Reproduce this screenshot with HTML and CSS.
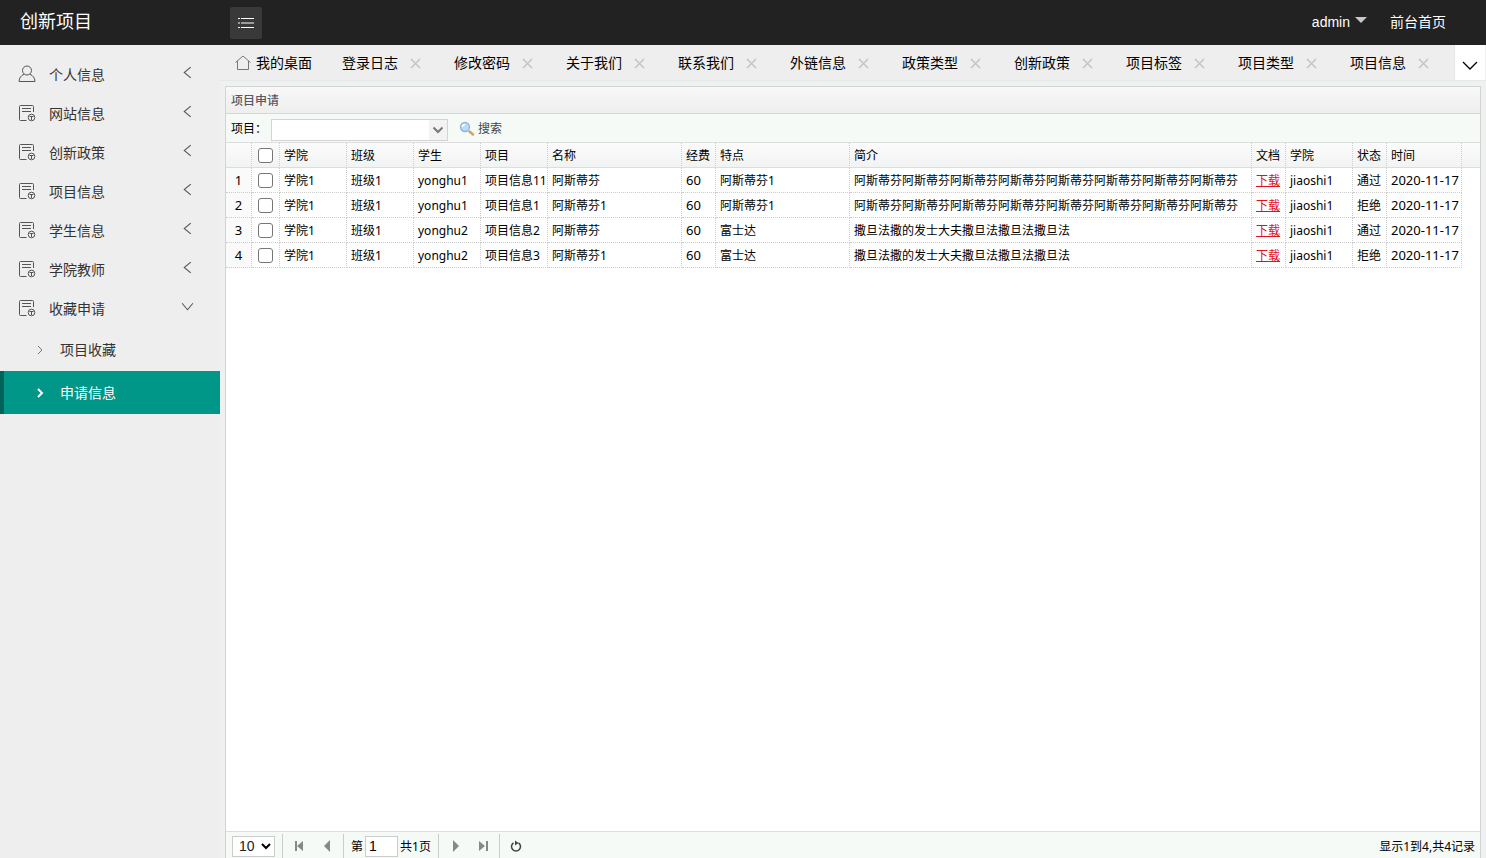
FILE: index.html
```html
<!DOCTYPE html>
<html lang="zh-CN">
<head>
<meta charset="utf-8">
<title>创新项目</title>
<link rel="stylesheet" href="styles.css">
</head>
<body>
<svg class="defs" width="0" height="0" aria-hidden="true">
  <symbol id="left" viewBox="0 0 12 12"><path d="M9 1 3 6l6 5"/></symbol>
  <symbol id="down" viewBox="0 0 12 12"><path d="m1 3 5 6 5-6"/></symbol>
  <symbol id="right" viewBox="0 0 12 12"><path d="m4 2 4 4-4 4"/></symbol>
  <symbol id="close" viewBox="0 0 12 12"><path d="m1 1 9 9M10 1 1 10"/></symbol>
  <symbol id="doc" viewBox="0 0 18 18"><path d="M15.500 8V2.500a1 1 0 0 0-1-1h-12a1 1 0 0 0-1 1v13a1 1 0 0 0 1 1H8.500M4 4.500h9M4 7.500h9"/><circle cx="13.500" cy="13.500" r="3.300"/><path d="M11.500 12.500h4M13.500 12.500v3.500"/></symbol>
  <symbol id="user" viewBox="0 0 18 18"><circle cx="9" cy="5.500" r="4.500"/><path d="M6 9.300C3 10.500 1.200 13 1 16.500h16c-.2-3.500-2-6-5-7.200"/></symbol>
</svg>
<header class="topbar">
  <a class="logo" href="#">创新项目</a>
  <button class="menu-toggle" aria-label="菜单"><svg width="18" height="12" viewBox="0 0 18 12"><path d="M1 1.500h2M4 1.500h13M1 6h2M4 6h13M1 10.500h2M4 10.500h13"/></svg></button>
  <nav class="top-links"><a href="#">admin<span class="caret"></span></a><a href="#">前台首页</a></nav>
</header>
<div class="shell">
  <nav class="sidebar">
    <a class="item" href="#"><svg class="kind"><use href="#user"/></svg>个人信息<svg class="arrow"><use href="#left"/></svg></a>
    <a class="item" href="#"><svg class="kind"><use href="#doc"/></svg>网站信息<svg class="arrow"><use href="#left"/></svg></a>
    <a class="item" href="#"><svg class="kind"><use href="#doc"/></svg>创新政策<svg class="arrow"><use href="#left"/></svg></a>
    <a class="item" href="#"><svg class="kind"><use href="#doc"/></svg>项目信息<svg class="arrow"><use href="#left"/></svg></a>
    <a class="item" href="#"><svg class="kind"><use href="#doc"/></svg>学生信息<svg class="arrow"><use href="#left"/></svg></a>
    <a class="item" href="#"><svg class="kind"><use href="#doc"/></svg>学院教师<svg class="arrow"><use href="#left"/></svg></a>
    <a class="item" href="#"><svg class="kind"><use href="#doc"/></svg>收藏申请<svg class="arrow"><use href="#down"/></svg></a>
    <a class="sub" href="#"><svg><use href="#right"/></svg>项目收藏</a>
    <a class="sub active" href="#"><svg><use href="#right"/></svg>申请信息</a>
  </nav>
  <main class="content">
    <div class="tabbar">
      <div class="tabs">
        <div class="tab home"><svg width="16" height="16" viewBox="0 0 16 16"><path d="M.500 7.500 8 1l7.500 6.500M2.500 6v8.500h11V6"/></svg><a href="#">我的桌面</a></div>
        <div class="tab"><a href="#">登录日志</a><button aria-label="关闭"><svg><use href="#close"/></svg></button></div>
        <div class="tab"><a href="#">修改密码</a><button aria-label="关闭"><svg><use href="#close"/></svg></button></div>
        <div class="tab"><a href="#">关于我们</a><button aria-label="关闭"><svg><use href="#close"/></svg></button></div>
        <div class="tab"><a href="#">联系我们</a><button aria-label="关闭"><svg><use href="#close"/></svg></button></div>
        <div class="tab"><a href="#">外链信息</a><button aria-label="关闭"><svg><use href="#close"/></svg></button></div>
        <div class="tab"><a href="#">政策类型</a><button aria-label="关闭"><svg><use href="#close"/></svg></button></div>
        <div class="tab"><a href="#">创新政策</a><button aria-label="关闭"><svg><use href="#close"/></svg></button></div>
        <div class="tab"><a href="#">项目标签</a><button aria-label="关闭"><svg><use href="#close"/></svg></button></div>
        <div class="tab"><a href="#">项目类型</a><button aria-label="关闭"><svg><use href="#close"/></svg></button></div>
        <div class="tab"><a href="#">项目信息</a><button aria-label="关闭"><svg><use href="#close"/></svg></button></div>
      </div>
      <button class="more" aria-label="更多"><svg width="16" height="10" viewBox="0 0 16 10"><path d="m1 1 7 7 7-7"/></svg></button>
    </div>
    <section class="panel">
      <h1 class="panel-title">项目申请</h1>
      <form class="toolbar">
        <label for="project">项目：</label>
        <span class="combo"><input id="project" type="text"><button type="button" aria-label="展开"><svg width="12" height="8" viewBox="0 0 12 8"><path d="m1.500 1.500 4.500 4.500 4.500-4.500"/></svg></button></span>
        <button class="search" type="button"><svg width="16" height="16" viewBox="0 0 16 16"><path d="m10.500 10.500 3.500 3" stroke="#d9a05a" stroke-width="2.500" stroke-linecap="round"/><circle cx="6" cy="6" r="4.500" fill="#b5dcf8" stroke="#8fb2dc" stroke-width="1.300"/><path d="M3.500 6A2.500 2.500 0 0 1 6 3.500" stroke="#fff" stroke-width="1.500" fill="none"/></svg>搜索</button>
      </form>
      <div class="grid-area">
        <table class="grid">
          <colgroup><col class="w-num"><col class="w-check"><col class="w-m"><col class="w-m"><col class="w-m"><col class="w-m"><col class="w-l"><col class="w-s"><col class="w-l"><col class="w-xl"><col class="w-s"><col class="w-m"><col class="w-s"><col class="w-date"><col></colgroup>
          <thead><tr><th></th><th class="check"><input type="checkbox" aria-label="全选"></th><th>学院</th><th>班级</th><th>学生</th><th>项目</th><th>名称</th><th>经费</th><th>特点</th><th>简介</th><th>文档</th><th>学院</th><th>状态</th><th>时间</th><th class="rest"></th></tr></thead>
          <tbody>
            <tr><td class="num">1</td><td class="check"><input type="checkbox" aria-label="选择第1行"></td><td>学院1</td><td>班级1</td><td>yonghu1</td><td>项目信息11</td><td>阿斯蒂芬</td><td class="figure">60</td><td>阿斯蒂芬1</td><td>阿斯蒂芬阿斯蒂芬阿斯蒂芬阿斯蒂芬阿斯蒂芬阿斯蒂芬阿斯蒂芬阿斯蒂芬</td><td><a href="#">下载</a></td><td>jiaoshi1</td><td>通过</td><td class="figure">2020-11-17</td><td class="rest"></td></tr>
            <tr><td class="num">2</td><td class="check"><input type="checkbox" aria-label="选择第2行"></td><td>学院1</td><td>班级1</td><td>yonghu1</td><td>项目信息1</td><td>阿斯蒂芬1</td><td class="figure">60</td><td>阿斯蒂芬1</td><td>阿斯蒂芬阿斯蒂芬阿斯蒂芬阿斯蒂芬阿斯蒂芬阿斯蒂芬阿斯蒂芬阿斯蒂芬</td><td><a href="#">下载</a></td><td>jiaoshi1</td><td>拒绝</td><td class="figure">2020-11-17</td><td class="rest"></td></tr>
            <tr><td class="num">3</td><td class="check"><input type="checkbox" aria-label="选择第3行"></td><td>学院1</td><td>班级1</td><td>yonghu2</td><td>项目信息2</td><td>阿斯蒂芬</td><td class="figure">60</td><td>富士达</td><td>撒旦法撒的发士大夫撒旦法撒旦法撒旦法</td><td><a href="#">下载</a></td><td>jiaoshi1</td><td>通过</td><td class="figure">2020-11-17</td><td class="rest"></td></tr>
            <tr><td class="num">4</td><td class="check"><input type="checkbox" aria-label="选择第4行"></td><td>学院1</td><td>班级1</td><td>yonghu2</td><td>项目信息3</td><td>阿斯蒂芬1</td><td class="figure">60</td><td>富士达</td><td>撒旦法撒的发士大夫撒旦法撒旦法撒旦法</td><td><a href="#">下载</a></td><td>jiaoshi1</td><td>拒绝</td><td class="figure">2020-11-17</td><td class="rest"></td></tr>
          </tbody>
        </table>
      </div>
      <footer class="pager">
        <span class="size"><select aria-label="每页条数"><option>10</option><option>20</option></select><svg width="10" height="8" viewBox="0 0 10 8"><path d="m1 2 4 4 4-4"/></svg></span>
        <span class="group"><button aria-label="首页"><svg viewBox="0 0 12 12"><path d="M2 1h2v10H2zM10 1v10L4 6z"/></svg></button><button aria-label="上一页"><svg viewBox="0 0 12 12"><path d="M9 0v12L3 6z"/></svg></button></span>
        <span class="group page"><label for="page">第</label><input id="page" type="text" value="1"><span>共1页</span></span>
        <span class="group"><button aria-label="下一页"><svg viewBox="0 0 12 12"><path d="M4 0v12l6-6z"/></svg></button><button aria-label="末页"><svg viewBox="0 0 12 12"><path d="M2 1v10l6-5zM9 1h2v10H9z"/></svg></button></span>
        <span class="group"><button class="reload" aria-label="刷新"><svg viewBox="0 0 12 12"><path d="M3.500 2.800A4.500 4.500 0 1 0 8.500 2.800"/><path d="M5 .500v5l3.500-2.500z" fill="#444" stroke="none"/></svg></button></span>
        <span class="total">显示1到4,共4记录</span>
      </footer>
    </section>
  </main>
</div>
</body>
</html>
```
FILE: styles.css
```css
* { box-sizing: border-box; }
body {
  display: flex;
  flex-direction: column;
  height: 100vh;
  margin: 0;
  overflow: hidden;
  background: #eee;
  color: #000;
  font: 12px/20px "Noto Sans", "Noto Sans CJK SC", sans-serif;
}
a { color: inherit; text-decoration: none; }
button { padding: 0; border: 0; background: none; color: inherit; font: inherit; }
svg { flex: none; fill: none; stroke: currentColor; }
.defs { position: absolute; }

.topbar {
  display: flex;
  flex: none;
  align-items: center;
  height: 45px;
  background: #222;
  color: #fff;
}
.logo { width: 230px; padding: 0 0 3px 20px; font-size: 18px; }
.menu-toggle {
  display: grid;
  place-items: center;
  width: 32px;
  height: 32px;
  border-radius: 2px;
  background: #393939;
}
.top-links {
  display: flex;
  gap: 23px;
  margin-left: auto;
  padding: 0 40px 2px 0;
  font: 14px/20px "Liberation Sans", "Noto Sans CJK SC", sans-serif;
}
.caret {
  display: inline-block;
  margin-left: 5px;
  border: 6px solid transparent;
  border-top-color: #c8c8c8;
  border-bottom: 0;
  vertical-align: 4px;
}

.shell { display: flex; flex: 1; min-height: 0; }
.sidebar {
  flex: none;
  width: 220px;
  padding-top: 10px;
  color: #333;
  font-size: 14px;
}
.item { display: flex; align-items: center; height: 39px; padding: 0 26px 0 18px; }
.kind { width: 18px; height: 18px; margin: 0 13px 2px 0; color: #555; }
.arrow { width: 13px; height: 13px; margin: 0 0 5px auto; color: #555; }
.sub {
  display: flex;
  align-items: center;
  height: 43px;
  padding-left: 30px;
  border-left: 4px solid transparent;
}
.sub svg { width: 12px; height: 12px; margin-right: 14px; color: #777; }
.active { border-color: #006358; background: #009688; color: #fff; }
.active svg { color: #fff; stroke-width: 2; }

.content { display: flex; flex: 1; flex-direction: column; min-width: 0; background: #eef1ef; }
.tabbar {
  display: flex;
  flex: none;
  height: 36px;
  padding-right: 1px;
  border-bottom: 1px solid #e5e9e7;
  background: #eee;
  font-size: 14px;
}
.tabs { display: flex; flex: 1; min-width: 0; overflow: hidden; }
.tab {
  display: flex;
  flex: none;
  align-items: center;
  width: 112px;
  padding-left: 15px;
  white-space: nowrap;
}
.home { width: 107px; gap: 5px; }
.home svg { color: #777; }
.tab button { display: flex; margin-left: 12px; padding-top: 2px; color: #c5c5c5; }
.tab button svg { width: 12px; height: 12px; stroke-width: 1.5; }
.more { display: grid; place-items: center; width: 31px; padding-top: 6px; border-left: 1px solid #e5e5e5; background: #fff; }
.more svg { stroke-width: 1.3; }

.panel {
  display: flex;
  flex: 1;
  flex-direction: column;
  min-height: 0;
  margin: 5px 5px 0;
  border: 1px solid #d3d3d3;
  border-bottom: 0;
  background: #fff;
}
.panel-title {
  height: 27px;
  margin: 0;
  padding: 4px 5px;
  border-bottom: 1px solid #d3d7d5;
  background: linear-gradient(#f8f8f8, #eee);
  color: #575765;
  font-size: 12px;
  font-weight: 500;
  line-height: 20px;
}
.toolbar {
  display: flex;
  align-items: center;
  height: 29px;
  padding: 2px 5px 0;
  border-bottom: 1px solid #ddd;
  background: #f5faf7;
}
.combo { display: flex; width: 177px; height: 22px; margin: 2px 0 0 4px; border: 1px solid #d3d3d3; background: #fff; }
.combo input { flex: 1; min-width: 0; padding: 0 4px; border: 0; font: inherit; }
.combo button { display: grid; place-items: center; width: 18px; background: #f3f3f3; color: #777; }
.combo svg { stroke-width: 2; }
.search { display: flex; align-items: center; gap: 3px; margin-left: 11px; color: #444; }
.search svg { stroke: none; }

.grid-area { flex: 1; min-height: 0; overflow: hidden; }
.grid { width: 100%; border-collapse: separate; border-spacing: 0; table-layout: fixed; }
.w-num { width: 26px; }
.w-check { width: 28px; }
.w-s { width: 34px; }
.w-m { width: 67px; }
.w-l { width: 134px; }
.w-xl { width: 402px; }
.w-date { width: 75px; }
th, td {
  height: 25px;
  padding: 2px 0 0 4px;
  overflow: hidden;
  border-right: 1px dotted #ccc;
  border-bottom: 1px dotted #ccc;
  font-weight: 400;
  line-height: 20px;
  text-align: left;
  white-space: nowrap;
}
th { border-bottom: 1px solid #ddd; }
thead tr { background: linear-gradient(#fbfbfb, #f1f3f2); }
td.rest { border: 0; }
th.rest { border-right: 0; }
.num { padding: 0; background: #fafafa; text-align: center; }
.num, .figure { font-size: 13px; }
.figure, .check { padding-top: 0; }
td a { color: #e0101c; text-decoration: underline; }
.grid input {
  display: block;
  width: 15px;
  height: 15px;
  margin: 0 0 0 2px;
  border: 1px solid #767676;
  border-radius: 3px;
  background: #fff;
  appearance: none;
}

.pager {
  display: flex;
  flex: none;
  align-items: center;
  height: 27px;
  padding: 2px 5px 0 6px;
  border-top: 1px solid #ddd;
  background: #f5faf7;
}
.size { display: flex; position: relative; margin-right: 7px; }
.size select {
  width: 43px;
  height: 21px;
  padding: 0 6px;
  border: 1px solid #ccc;
  background: #fff;
  color: #222;
  font: 14px "Liberation Sans", sans-serif;
  appearance: none;
}
.size svg { position: absolute; top: 6px; right: 4px; stroke-width: 2; pointer-events: none; }
.group { display: flex; align-items: center; height: 24px; padding: 0 2px; border-left: 1px solid #ccc; }
.group button { display: grid; place-items: center; width: 28px; height: 24px; color: #888; }
.group button svg { width: 12px; height: 12px; fill: currentColor; stroke: none; }
.group .reload svg { fill: none; stroke: #444; stroke-width: 1.5; }
.page { padding: 0 7px; }
.page input {
  width: 33px;
  height: 21px;
  margin: 0 2px;
  padding: 0 3px;
  border: 1px solid #ccc;
  font: 14px "Liberation Sans", sans-serif;
}
.page label, .page span, .total { padding-top: 2px; }
.total { margin-left: auto; }
```
